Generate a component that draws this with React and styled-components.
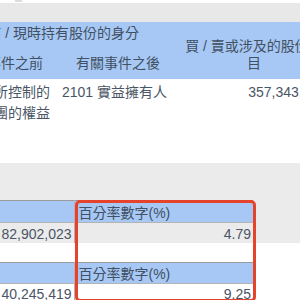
import React from "react";
import styled, { createGlobalStyle } from "styled-components";

const GlobalStyle = createGlobalStyle`
  html, body {
    margin: 0;
    padding: 0;
    background: #fff;
    overflow: hidden;
  }
  body {
    width: 300px;
    height: 300px;
    font-family: "Liberation Sans", "Noto Sans CJK TC", sans-serif;
    color: #4a5566;
  }
`;

const Page = styled.div`
  width: 300px;
  height: 300px;
  overflow: hidden;
`;

const Strip = styled.div`
  display: flex;
  height: 3px;
`;

const Notch = styled.div`
  width: 7px;
  height: 2px;
  margin-left: 15px;
  background: #dcdcdc;
`;

const TopBar = styled.div`
  height: 19px;
  background: #e8e8e8;
`;

const MainTable = styled.table`
  border-collapse: collapse;
  table-layout: fixed;
  width: 384px;
  margin-left: -55px;
  font-size: 14px;
`;

const HeadCell = styled.th`
  background: #a7c8f4;
  color: #415063;
  font-weight: normal;
  padding: ${(p) => p.$padTop || 0}px 0 ${(p) => p.$padBottom || 0}px 0;
  height: ${(p) => p.$h}px;
  line-height: 17px;
  text-align: center;
  vertical-align: ${(p) => p.$valign || "middle"};
`;

const GroupTitle = styled.div`
  margin-left: -140px;
  padding-right: 40px;
  text-align: right;
  white-space: nowrap;
`;

const DataCell = styled.td`
  height: 81px;
  padding: 3px ${(p) => p.$padRight || 0}px 0 ${(p) => p.$padLeft || 0}px;
  vertical-align: top;
  line-height: 21px;
  text-align: ${(p) => p.$align || "left"};
  background: #fff;
`;

const Sections = styled.div`
  position: relative;
`;

const Section = styled.div`
  background: ${(p) => p.$bg};
  height: ${(p) => p.$h}px;
  padding-top: ${(p) => p.$top}px;
  box-sizing: border-box;
`;

const MiniTable = styled.table`
  border-collapse: collapse;
  table-layout: fixed;
  width: 353px;
  margin-left: -100px;
  font-size: 14px;
`;

const MiniHead = styled.th`
  background: #a7c8f4;
  color: #415063;
  font-weight: normal;
  text-align: left;
  height: ${(p) => p.$h}px;
  padding: 0 0 0 4px;
  border-top: 1px solid #9a9a9a;
  border-bottom: 1px solid #b4b4b4;
  border-right: ${(p) => (p.$divider ? "1px solid #b4b4b4" : "none")};
`;

const MiniValue = styled.td`
  height: ${(p) => p.$h}px;
  padding: 0 2px 0 0;
  text-align: right;
  border-right: ${(p) => (p.$divider ? "1px solid #b4b4b4" : "none")};
`;

const Highlight = styled.div`
  position: absolute;
  left: 75px;
  top: 37px;
  width: 181px;
  height: 102px;
  box-sizing: border-box;
  border: 3px solid #e6432c;
  border-radius: 5px;
  pointer-events: none;
`;

const rows = [
  { bg: "#ebebeb", h: 80, top: 37, amount: "82,902,023", pct: "4.79", head: 21, val: 22 },
  { bg: "#ffffff", h: 63, top: 19, amount: "40,245,419", pct: "9.25", head: 19, val: 19 },
];

export default function App() {
  return (
    <Page>
      <GlobalStyle />
      <Strip>
        <Notch />
      </Strip>
      <TopBar />
      <MainTable>
        <colgroup>
          <col style={{ width: 112 }} />
          <col style={{ width: 122 }} />
          <col style={{ width: 150 }} />
        </colgroup>
        <thead>
          <tr>
            <HeadCell colSpan={2} $h={22}>
              <GroupTitle>緊接有關事件之前 / 現時持有股份的身分</GroupTitle>
            </HeadCell>
            <HeadCell rowSpan={2} $valign="bottom" $padBottom={7}>
              買 / 賣或涉及的股份數目
            </HeadCell>
          </tr>
          <tr>
            <HeadCell $h={32} $padTop={3}>
              有關事件之前
            </HeadCell>
            <HeadCell $h={32} $padTop={3}>
              有關事件之後
            </HeadCell>
          </tr>
        </thead>
        <tbody>
          <tr>
            <DataCell $align="right" $padRight={7} $padLeft={15}>
              由你所控制的法團的權益
            </DataCell>
            <DataCell $padLeft={5}>2101 實益擁有人</DataCell>
            <DataCell $align="right" $padRight={3}>
              357,343,013
            </DataCell>
          </tr>
        </tbody>
      </MainTable>
      <Sections>
        {rows.map((r) => (
          <Section key={r.amount} $bg={r.bg} $h={r.h} $top={r.top}>
            <MiniTable>
              <colgroup>
                <col style={{ width: 174 }} />
                <col style={{ width: 179 }} />
              </colgroup>
              <tbody>
                <tr>
                  <MiniHead $h={r.head} $divider>
                    股份數目
                  </MiniHead>
                  <MiniHead $h={r.head}>百分率數字(%)</MiniHead>
                </tr>
                <tr>
                  <MiniValue $h={r.val} $divider>
                    {r.amount}
                  </MiniValue>
                  <MiniValue $h={r.val}>{r.pct}</MiniValue>
                </tr>
              </tbody>
            </MiniTable>
          </Section>
        ))}
        <Highlight />
      </Sections>
    </Page>
  );
}
